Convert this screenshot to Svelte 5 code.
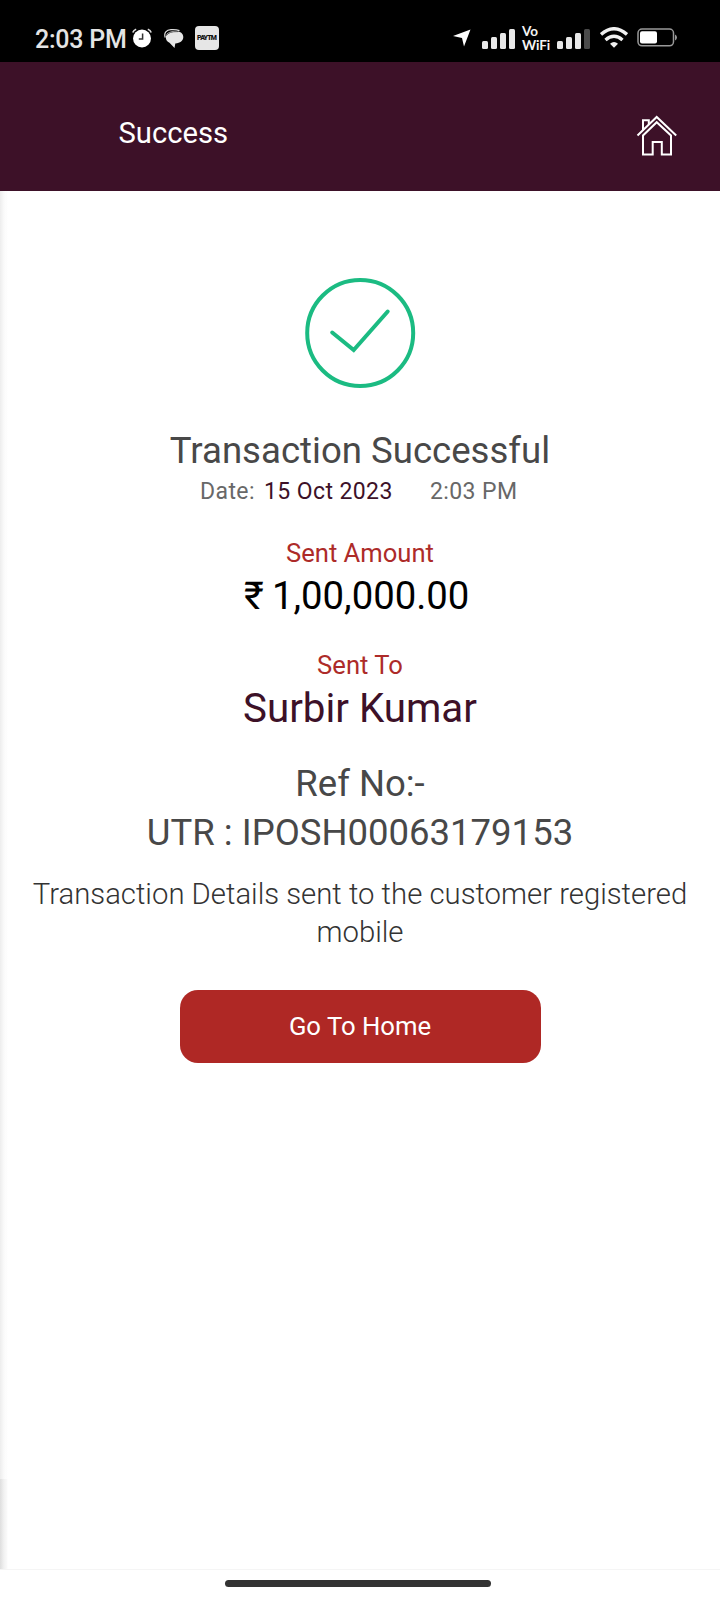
<script>
  const date = '15 Oct 2023';
  const time = '2:03 PM';
  const bars = [
    { x: 0, h: 8 },
    { x: 9, h: 12 },
    { x: 18, h: 16 },
    { x: 27, h: 20 }
  ];
</script>

<div class="screen">
  <div class="status">
    <span class="clock">{time}</span>
    <svg class="alarm" width="20" height="20" viewBox="0 0 20 20">
      <circle cx="10" cy="10.5" r="9" fill="#fff" />
      <path d="M.8 4.6Q1.6 2 4.2 1.2M19.2 4.6Q18.4 2 15.8 1.2" fill="none" stroke="#ddd" stroke-width="1.6" />
      <path d="M10.6 5.5V11H6.8" fill="none" stroke="#333" stroke-width="1.5" />
    </svg>
    <svg class="chat" width="20" height="20" viewBox="0 0 20 20">
      <path d="M10.500 2C16 2 19.300 4.300 19.300 8c0 3.600-3 6-8 6.500L10.500 19l-5-5.200C3 12.400 1.800 10.600 1.800 8.400 1.800 4.300 5.500 2 10.500 2z" fill="#e6e6e6" />
      <path d="M1.200 8.500C-.400 4 2.500 .900 7 .700q5-.3 8.500 .9" fill="none" stroke="#ddd" stroke-width="1.200" />
      <path d="M2.500 6.500Q4.500 2.300 14 2.600" fill="none" stroke="#333" stroke-width=".8" />
    </svg>
    <span class="paytm"><b>PAYTM</b></span>
    <span class="grow"></span>
    <svg class="plane" width="18" height="18" viewBox="0 0 18 18">
      <path d="M17.500 .500 11 17.500 9 9 0 7z" fill="#fff" />
    </svg>
    <svg class="sig one" width="33" height="20" viewBox="0 0 33 20">
      {#each bars as b}
        <rect x={b.x} y={20 - b.h} width="6" height={b.h} rx="1.5" fill="#e8e8e8" />
      {/each}
    </svg>
    <span class="vowifi"><span>Vo</span><span>WiFi</span></span>
    <svg class="sig two" width="33" height="20" viewBox="0 0 33 20">
      {#each bars as b, i}
        <rect x={b.x} y={20 - b.h} width="6" height={b.h} rx="1.5" fill={i === 3 ? '#4a4a4a' : '#e8e8e8'} />
      {/each}
    </svg>
    <svg class="wifi" width="28" height="21" viewBox="0 0 28 21">
      <path d="M1 7.500Q14-4 27 7.500" fill="none" stroke="#f0f0f0" stroke-width="3.400" />
      <path d="M5.500 13Q14 5.700 22.500 13" fill="none" stroke="#f0f0f0" stroke-width="3.400" />
      <path d="M10 16.800Q14 13 18 16.800L14 20.800z" fill="#f0f0f0" />
    </svg>
    <svg class="battery" width="41" height="19" viewBox="0 0 41 19">
      <rect x="1" y="1" width="35.500" height="16.800" rx="4" fill="none" stroke="#999" stroke-width="1.500" />
      <rect x="3" y="3.200" width="17" height="12.400" rx="2" fill="#fff" />
      <path d="M38 6.500q2 .8 2 3t-2 3z" fill="#999" />
    </svg>
  </div>

  <header>
    <h1>Success</h1>
    <svg class="home" width="42" height="42" viewBox="0 0 42 42" fill="none" stroke="#fff" stroke-width="2">
      <path d="M1.500 20.500 20.700 2 40.200 20.500" />
      <path d="M7 20.500V39.500H16.700V27H25.800V39.500H35V20.500L20.700 7.200z" />
      <path d="M7 15.500V5.200H12.800V9.500" />
    </svg>
  </header>

  <main>
    <svg class="check" width="112" height="112" viewBox="0 0 112 112" fill="none" stroke="#1bbb82" stroke-width="4">
      <circle cx="56.200" cy="55" r="53" />
      <path d="M28.200 54.500 49.700 72 83.700 33.500" stroke-linecap="round" />
    </svg>
    <h2>Transaction Successful</h2>
    <div class="when">
      <span class="dl">Date:</span><span class="date">{date}</span><span>{time}</span>
    </div>
    <div class="label first">Sent Amount</div>
    <div class="amount"><span class="rupee">₹</span><span>1,00,000.00</span></div>
    <div class="label second">Sent To</div>
    <div class="name">Surbir Kumar</div>
    <div class="ref"><span>Ref No:-</span><span>UTR : IPOSH00063179153</span></div>
    <p>Transaction Details sent to the customer registered mobile</p>
    <button>Go To Home</button>
  </main>
  <footer><div class="pill"></div></footer>
</div>

<style>
  :global(body) { margin: 0; background: #fff; }
  .screen { width: 720px; height: 1600px; display: flex; flex-direction: column; font-family: Roboto, sans-serif; overflow: hidden; background: #fff; }
  svg { display: block; flex: none; }
  .status { height: 62px; background: #000; display: flex; align-items: flex-start; box-sizing: border-box; padding: 0 42px 0 35px; color: #e4e4e4; flex: none; }
  .clock { font-size: 25px; line-height: 30px; margin-top: 25px; width: 97px; white-space: nowrap; font-weight: 500; letter-spacing: -.25px; }
  .alarm { margin-top: 28px; }
  .chat { margin: 29px 0 0 12px; }
  .paytm { margin: 26px 0 0 11px; width: 24px; height: 24px; border-radius: 4px; background: #e6e6e6; color: #111; display: flex; align-items: center; justify-content: center; }
  .paytm b { font-size: 7px; line-height: 8px; font-weight: 900; letter-spacing: -.8px; padding-right: .8px; }
  .grow { flex: 1; }
  .plane { margin: 29px 11px 0 0; }
  .sig { margin-top: 29px; }
  .vowifi { width: 35px; margin: 24px 0 0 7px; display: flex; flex-direction: column; font: 700 13.500px/14px Lato, sans-serif; color: #f4f4f4; white-space: nowrap; letter-spacing: -.1px; }
  .wifi { margin: 27px 9px 0 10px; }
  .battery { margin-top: 28px; }
  header { height: 128.500px; flex: none; background: #3d1128; color: #fff; display: flex; box-sizing: border-box; padding: 0 42px 0 118.500px; justify-content: space-between; }
  h1 { margin: 51px 0 0; font-size: 29.200px; line-height: 40px; font-weight: 400; }
  .home { margin-top: 53px; }
  main { flex: 1; min-height: 0; display: flex; flex-direction: column; align-items: center; text-align: center; background: linear-gradient(90deg, #dedede 0, #f2f2f2 4px, transparent 8px) left bottom / 8px 90px no-repeat, linear-gradient(90deg, #ededed 0, #fafafa 4px, transparent 8px), #fff; border-bottom: 1px solid #f5f5f5; box-sizing: border-box; color: #484848; }
  .check { margin-top: 87.500px; }
  h2 { margin: 41px 0 0; font-size: 36.600px; line-height: 40px; font-weight: 400; }
  .when { display: flex; font-size: 23px; line-height: 30px; margin-top: 6px; width: 320px; color: #686868; white-space: nowrap; text-align: left; letter-spacing: .4px; }
  .dl { width: 64px; }
  .date { width: 166px; color: #3d1128; }
  .label { font-size: 25.600px; line-height: 30px; color: #ad2b29; }
  .first { margin-top: 31px; }
  .second { margin-top: 32px; }
  .amount { margin-top: 6px; font-size: 38.300px; line-height: 44px; color: #000; display: flex; width: 232px; white-space: nowrap; }
  .rupee { width: 28px; flex: none; text-align: left; }
  .name { margin-top: 5px; font-size: 40.300px; line-height: 48px; color: #3d1128; }
  .ref { display: flex; flex-direction: column; margin-top: 26px; font-size: 36.500px; line-height: 49px; white-space: nowrap; }
  p { margin: 19px 0 0; width: 690px; font-size: 29.300px; line-height: 37.500px; font-weight: 300; color: #333; }
  button { margin: 38.500px 0 0; width: 361px; height: 73px; flex: none; border: 0; border-radius: 18px; background: #af2825; color: #fff; font: 400 25.700px/40px Roboto, sans-serif; padding: 0; }
  footer { height: 30px; flex: none; display: flex; justify-content: center; box-sizing: border-box; padding: 10px 5px 0 0; background: #fff; }
  .pill { width: 266px; height: 7px; border-radius: 4px; background: #333; }
</style>
